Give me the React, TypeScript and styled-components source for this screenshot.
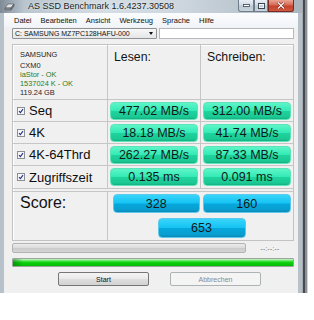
import React from 'react';
import styled, { createGlobalStyle } from 'styled-components';

const GlobalStyle = createGlobalStyle`
  html, body {
    margin: 0;
    padding: 0;
    background: #ffffff;
  }
  body {
    font-family: "Liberation Sans", Arial, sans-serif;
  }
`;

const Page = styled.div`
  width: 314px;
  height: 320px;
  display: flex;
  align-items: flex-start;
`;

const Window = styled.div`
  width: 302px;
  display: flex;
  flex-direction: column;
`;

const Shade = styled.div`
  width: 6px;
  height: 293px;
  background: linear-gradient(to right, #a3a9ae 0 1px, #464a4e 1px 3px, #8d9195 3px 5px, #d2d4d6 5px);
`;

const TitleBar = styled.div`
  height: 13px;
  display: flex;
  align-items: flex-start;
  background: linear-gradient(to right, #7f8c97 0, #b9c5cf 8%, #d5dde4 35%, #cdd6de 60%, #b7c2cb 85%, #a8b3bd 100%);
`;

const TitleIcon = styled.svg`
  width: 11px;
  height: 11px;
  margin: 1px 0 0 4px;
  flex: none;
`;

const TitleText = styled.span`
  margin-left: 13px;
  font-size: 9px;
  line-height: 12px;
  color: #1b1f24;
  text-shadow: 0 0 3px rgba(255, 255, 255, 0.9);
  white-space: nowrap;
`;

const Controls = styled.div`
  margin-left: auto;
  margin-right: 8px;
  display: flex;
  height: 12px;
`;

const CtrlButton = styled.div<{ $close?: boolean; $w: number }>`
  width: ${p => p.$w}px;
  height: 12px;
  box-sizing: border-box;
  border: 1px solid ${p => (p.$close ? '#7a2a20' : '#6f7c89')};
  border-top: none;
  border-radius: ${p => (p.$close ? '0 0 3px 0' : '0')};
  background: ${p =>
    p.$close
      ? 'linear-gradient(#e9a494 0, #d66a55 45%, #c4412c 55%, #d0593f 100%)'
      : 'linear-gradient(#e8eef4 0, #d3dce5 45%, #bcc8d4 55%, #cad4de 100%)'};
  display: flex;
  align-items: center;
  justify-content: center;
  &:first-child {
    border-radius: 0 0 0 3px;
  }
`;

const Client = styled.div`
  height: 280px;
  box-sizing: border-box;
  border-left: 4px solid #b7c1ca;
  border-right: 4px solid #b7c1ca;
  background: #f0f0f0;
  display: flex;
  flex-direction: column;
`;

const MenuBar = styled.div`
  height: 15px;
  display: flex;
  align-items: center;
  gap: 9px;
  padding-left: 10px;
  background: linear-gradient(#fbfcfd, #f1f4f8);
  border-bottom: 1px solid #f0f0f0;
  box-sizing: border-box;
`;

const MenuItem = styled.span`
  font-size: 7.5px;
  color: #111;
`;

const Content = styled.div`
  padding: 0 4px 0 8px;
  display: flex;
  flex-direction: column;
`;

const ComboRow = styled.div`
  display: flex;
  gap: 2px;
  height: 11px;
`;

const Combo = styled.div`
  width: 145px;
  box-sizing: border-box;
  border: 1px solid #8f9396;
  border-radius: 1px;
  background: linear-gradient(#f7f7f7, #e6e6e6);
  display: flex;
  align-items: center;
  padding-left: 2px;
  font-size: 7px;
  color: #111;
  white-space: nowrap;
`;

const ComboArrow = styled.span`
  margin-left: auto;
  margin-right: 3px;
  width: 0;
  height: 0;
  border-left: 2.5px solid transparent;
  border-right: 2.5px solid transparent;
  border-top: 3px solid #111;
`;

const TextBox = styled.div`
  flex: 1;
  box-sizing: border-box;
  border: 1px solid #b5b9bd;
  background: #ffffff;
`;

const Frame = styled.div`
  margin-top: 5px;
  border: 1px solid #c3c3c3;
  box-shadow: inset 1px 1px 0 #ffffff;
  display: flex;
  flex-direction: column;
`;

const Table = styled.div`
  display: grid;
  grid-template-columns: 95px 93px 1fr;
  grid-template-rows: 55px repeat(4, 22px);
`;

const Cell = styled.div`
  box-sizing: border-box;
  border-right: 1px solid #c6c6c6;
  border-bottom: 1px solid #c6c6c6;
  display: flex;
  align-items: center;
  &:nth-child(3n) {
    border-right: none;
  }
  &:nth-last-child(-n + 3) {
    border-bottom: none;
  }
`;

const HeadCell = styled(Cell)`
  align-items: flex-start;
  padding: 5px 0 0 6px;
`;

const ColTitle = styled.span`
  font-size: 12.3px;
  color: #151515;
`;

const DriveInfo = styled.div`
  display: flex;
  flex-direction: column;
  font-size: 7.4px;
  line-height: 9px;
  padding-left: 1px;
`;

const InfoLine = styled.span<{ $tone?: string; $gap?: number }>`
  color: ${p => p.$tone || '#1d1d1d'};
  margin-bottom: ${p => p.$gap || 0}px;
  white-space: nowrap;
`;

const TestCell = styled(Cell)`
  padding-left: 4px;
  gap: 4px;
`;

const Check = styled.svg`
  width: 8px;
  height: 8px;
  flex: none;
`;

const TestName = styled.span`
  font-size: 13px;
  color: #0e0e0e;
`;

const ValueCell = styled(Cell)`
  justify-content: center;
`;

const Pill = styled.div<{ $blue?: boolean; $w?: number; $h?: number }>`
  width: ${p => p.$w || 88}px;
  height: ${p => p.$h || 18}px;
  box-sizing: border-box;
  border-radius: 4px;
  border: 1px solid ${p => (p.$blue ? '#5cc8ec' : '#5ee4b8')};
  background: ${p =>
    p.$blue
      ? 'linear-gradient(#38d4fb 0, #16c3f3 48%, #06a8dc 52%, #0a9dcf 88%, #0b88b4 100%)'
      : 'linear-gradient(#5ef5c8 0, #33eab5 48%, #1fd39d 52%, #1bc893 88%, #16ad80 100%)'};
  display: flex;
  align-items: center;
  justify-content: center;
  font-size: 12.5px;
  color: #121a18;
  white-space: nowrap;
`;

const ScoreRow = styled.div`
  display: grid;
  grid-template-columns: 95px 1fr;
  border-top: 4px double #c6c6c6;
  height: 48px;
`;

const ScoreLabel = styled.div`
  border-right: 1px solid #c6c6c6;
  padding: 2px 0 0 7px;
  font-size: 16px;
  color: #111;
`;

const ScoreGrid = styled.div`
  display: grid;
  grid-template-columns: 1fr 1fr;
  justify-items: center;
  row-gap: 3px;
  padding: 2px 1px 0 3px;
`;

const TotalSlot = styled.div`
  grid-column: 1 / 3;
`;

const ProgressRow = styled.div`
  margin-top: 2px;
  display: flex;
  align-items: center;
`;

const Bar = styled.div`
  width: 234px;
  height: 10px;
  box-sizing: border-box;
  border: 1px solid #b3b3b3;
  border-radius: 2px;
  background: linear-gradient(#ececec 0, #dcdcdc 45%, #cbcbcb 55%, #d6d6d6 100%);
`;

const TimeText = styled.span`
  flex: 1;
  text-align: center;
  font-size: 6.5px;
  color: #6a6a6a;
  letter-spacing: 0.3px;
`;

const GreenBar = styled.div`
  margin-top: 5px;
  height: 9px;
  box-sizing: border-box;
  border: 1px solid #9ca59c;
  border-radius: 1px;
  background:
    linear-gradient(to right, rgba(0, 90, 0, 0.45) 0, rgba(0, 90, 0, 0) 10px),
    linear-gradient(#d2f7d2 0, #5de65d 25%, #0dd10d 50%, #04bb04 100%);
`;

const ButtonRow = styled.div`
  margin-top: 5px;
  display: flex;
  gap: 21px;
  padding-left: 46px;
`;

const Button = styled.div<{ $disabled?: boolean }>`
  width: 91px;
  height: 14px;
  box-sizing: border-box;
  border: 1px solid ${p => (p.$disabled ? '#adb2b5' : '#767676')};
  border-radius: 2px;
  background: ${p =>
    p.$disabled
      ? '#f4f4f4'
      : 'linear-gradient(#f4f4f4 0, #ebebeb 45%, #dddddd 55%, #d2d2d2 100%)'};
  display: flex;
  align-items: center;
  justify-content: center;
  font-size: 7px;
  color: ${p => (p.$disabled ? '#8a8a8a' : '#111')};
`;

const CheckBox = () => (
  <Check viewBox="0 0 8 8">
    <rect x="0.5" y="0.5" width="7" height="7" fill="#f7f7f7" stroke="#8a8f94" />
    <path d="M2 4.2 L3.4 5.7 L6 2.2" fill="none" stroke="#25318a" strokeWidth="1.1" />
  </Check>
);

const tests = [
  { name: 'Seq', read: '477.02 MB/s', write: '312.00 MB/s' },
  { name: '4K', read: '18.18 MB/s', write: '41.74 MB/s' },
  { name: '4K-64Thrd', read: '262.27 MB/s', write: '87.33 MB/s' },
  { name: 'Zugriffszeit', read: '0.135 ms', write: '0.091 ms' },
];

const menu = ['Datei', 'Bearbeiten', 'Ansicht', 'Werkzeug', 'Sprache', 'Hilfe'];

const App = () => (
  <Page>
    <GlobalStyle />
    <Window>
      <TitleBar>
        <TitleIcon viewBox="0 0 11 11">
          <path d="M1 7 L4 3 L10 3 L7 7 Z" fill="#dfe3e6" stroke="#5b6066" strokeWidth="0.7" />
          <path d="M1 7 L7 7 L7 9 L1 9 Z" fill="#8b9196" stroke="#5b6066" strokeWidth="0.7" />
          <path d="M7 7 L10 3 L10 5 L7 9 Z" fill="#6c7277" stroke="#5b6066" strokeWidth="0.7" />
        </TitleIcon>
        <TitleText>AS SSD Benchmark 1.6.4237.30508</TitleText>
        <Controls>
          <CtrlButton $w={16}>
            <svg width="7" height="3" viewBox="0 0 7 3">
              <rect x="0.5" y="0.5" width="6" height="2" fill="#fff" stroke="#3a4450" strokeWidth="0.8" />
            </svg>
          </CtrlButton>
          <CtrlButton $w={14}>
            <svg width="7" height="6" viewBox="0 0 7 6">
              <rect x="0.5" y="0.5" width="6" height="5" fill="none" stroke="#3a4450" strokeWidth="1" />
              <rect x="1.3" y="1.6" width="4.4" height="3" fill="none" stroke="#fff" strokeWidth="0.7" />
            </svg>
          </CtrlButton>
          <CtrlButton $w={26} $close>
            <svg width="8" height="7" viewBox="0 0 8 7">
              <path d="M1 0.5 L7 6.5 M7 0.5 L1 6.5" stroke="#5a1a10" strokeWidth="2.2" />
              <path d="M1 0.5 L7 6.5 M7 0.5 L1 6.5" stroke="#fff" strokeWidth="1.2" />
            </svg>
          </CtrlButton>
        </Controls>
      </TitleBar>
      <Client>
        <MenuBar>
          {menu.map(m => (
            <MenuItem key={m}>{m}</MenuItem>
          ))}
        </MenuBar>
        <Content>
          <ComboRow>
            <Combo>
              C: SAMSUNG MZ7PC128HAFU-000
              <ComboArrow />
            </Combo>
            <TextBox />
          </ComboRow>
          <Frame>
            <Table>
              <HeadCell>
                <DriveInfo>
                  <InfoLine $gap={2}>SAMSUNG</InfoLine>
                  <InfoLine>CXM0</InfoLine>
                  <InfoLine $tone="#1f7d1f">iaStor - OK</InfoLine>
                  <InfoLine $tone="#1f7d1f">1537024 K - OK</InfoLine>
                  <InfoLine $tone="#2b1a2b">119.24 GB</InfoLine>
                </DriveInfo>
              </HeadCell>
              <HeadCell>
                <ColTitle>Lesen:</ColTitle>
              </HeadCell>
              <HeadCell>
                <ColTitle>Schreiben:</ColTitle>
              </HeadCell>
              {tests.map(t => (
                <React.Fragment key={t.name}>
                  <TestCell>
                    <CheckBox />
                    <TestName>{t.name}</TestName>
                  </TestCell>
                  <ValueCell>
                    <Pill>{t.read}</Pill>
                  </ValueCell>
                  <ValueCell>
                    <Pill>{t.write}</Pill>
                  </ValueCell>
                </React.Fragment>
              ))}
            </Table>
            <ScoreRow>
              <ScoreLabel>Score:</ScoreLabel>
              <ScoreGrid>
                <Pill $blue $h={19} $w={87}>328</Pill>
                <Pill $blue $h={19} $w={88}>160</Pill>
                <TotalSlot>
                  <Pill $blue $h={20}>653</Pill>
                </TotalSlot>
              </ScoreGrid>
            </ScoreRow>
          </Frame>
          <ProgressRow>
            <Bar />
            <TimeText>--:--:--</TimeText>
          </ProgressRow>
          <GreenBar />
          <ButtonRow>
            <Button>Start</Button>
            <Button $disabled>Abbrechen</Button>
          </ButtonRow>
        </Content>
      </Client>
    </Window>
    <Shade />
  </Page>
);

export default App;
